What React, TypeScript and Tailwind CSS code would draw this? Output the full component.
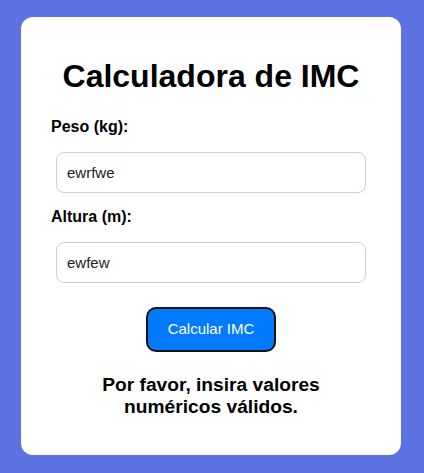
import React, { useState } from 'react';

const App: React.FC = () => {
  const [peso, setPeso] = useState('ewrfwe');
  const [altura, setAltura] = useState('ewfew');

  return (
    <div className="min-h-screen w-full bg-[#5d73e1] pt-[17px] pl-[21px] font-['Liberation_Sans',Arial,sans-serif]">
      {/* Card */}
      <div className="w-[380px] h-[438px] bg-white rounded-[12px] px-[30px]">
        <h1 className="pt-[41px] text-[32px] leading-[37px] font-bold text-black text-center">
          Calculadora de IMC
        </h1>

        <label className="block mt-[23px] text-[16px] leading-[18px] font-bold text-black">Peso (kg):</label>
        <input
          value={peso}
          onChange={e => setPeso(e.target.value)}
          className="block mt-[16px] ml-[5px] w-[310px] h-[41px] px-[10px] border border-[#cfcfcf] rounded-[8px] text-[15px] text-[#222] outline-none"
        />

        <label className="block mt-[15px] text-[16px] leading-[18px] font-bold text-black">Altura (m):</label>
        <input
          value={altura}
          onChange={e => setAltura(e.target.value)}
          className="block mt-[16px] ml-[5px] w-[310px] h-[41px] px-[10px] border border-[#cfcfcf] rounded-[8px] text-[15px] text-[#222] outline-none"
        />

        <div className="flex justify-center mt-[24px]">
          <button className="w-[130px] h-[45px] bg-[#007bff] border-2 border-[#111] rounded-[10px] text-white text-[15px]">
            Calcular IMC
          </button>
        </div>

        <p className="mt-[22px] mx-auto w-[270px] text-center text-[19.2px] leading-[22px] font-bold text-black">
          Por favor, insira valores numéricos válidos.
        </p>
      </div>
    </div>
  );
};

export default App;
